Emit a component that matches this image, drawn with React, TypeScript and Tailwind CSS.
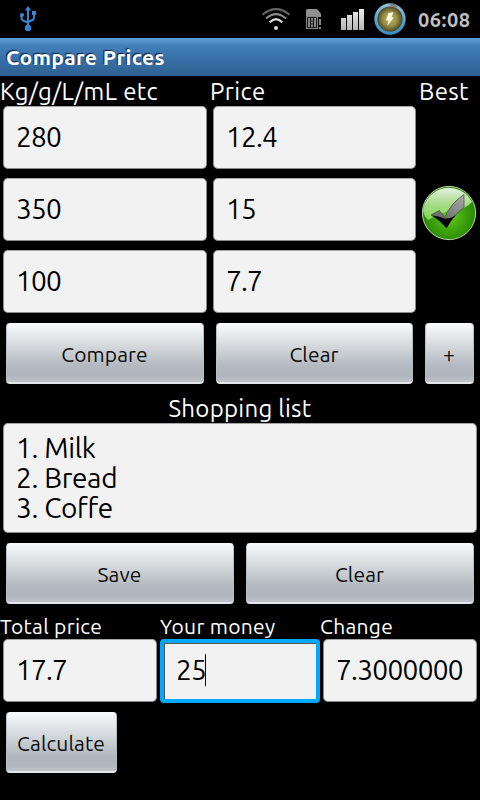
import type { ReactNode } from 'react'

const rows = [
  { amount: '280', price: '12.4' },
  { amount: '350', price: '15' },
  { amount: '100', price: '7.7' },
]

function Field({ children, className = '' }: { children: ReactNode; className?: string }) {
  return (
    <div className={`flex rounded-[5px] border border-[#8c8c8c] border-t-[#a5a5a5] bg-[#f2f2f2] pl-3 text-[28px] leading-[30px] text-black ${className}`}>
      {children}
    </div>
  )
}

function Button({ children, className = '' }: { children: ReactNode; className?: string }) {
  return (
    <button className={`h-[61px] rounded-[4px] border-x border-b-2 border-x-[#b9bec3] border-b-[#e3e5e7] bg-[linear-gradient(#fafbfc_0%,#e4e8eb_22%,#c5cacf_55%,#b2b7c0_75%,#b0b5be_90%,#c0c4c8_100%)] pt-[2px] pr-[1px] text-[21px] leading-[26px] tracking-[0.1px] text-[#0c0c0c] ${className}`}>
      {children}
    </button>
  )
}

function UsbIcon() {
  return (
    <svg className="ml-[18px] h-[28px] w-[20px]" viewBox="0 0 20 28" fill="none" stroke="#3487d3" strokeWidth="2">
      <path d="M10 4v19M10 17.500 5 15.500Q3.500 15 3.500 13V11M10 17l4.500-2Q16 14.400 16 12V9" />
      <path d="m6.800 5.500 3.200-4.500 3.200 4.500Z" fill="#3487d3" stroke="none" />
      <circle cx="4" cy="10" r="2.100" fill="#3487d3" stroke="none" />
      <path d="M14 6h4v4h-4Z" fill="#3487d3" stroke="none" />
      <circle cx="10" cy="23" r="3.2" fill="#3487d3" stroke="none" />
    </svg>
  )
}

function WifiIcon() {
  return (
    <svg className="h-[24px] w-[30px]" viewBox="0 0 30 24" fill="none" strokeWidth="2">
      <path d="M1.5 7.7Q15-3.500 28.5 7.7" stroke="#666" />
      <path d="M5 11.6Q15 2.6 25 11.6" stroke="#8b8b8b" />
      <path d="M8.8 15.2Q15 9 21.2 15.2" stroke="#ddd" strokeWidth="2.3" />
      <circle cx="15" cy="21" r="2" fill="#ddd" />
    </svg>
  )
}

function SimIcon() {
  return (
    <svg className="ml-[15px] h-[20px] w-[16px]" viewBox="0 0 16 20">
      <path d="M0 1.5Q0 0 1.5 0H11l4 4.5V8H0Z" fill="#909090" />
      <path d="M0 7h12v13H0Z" fill="#858585" />
      <path d="M1.5 8.5h9v10h-9ZM4.5 9v3M7.5 9v3M4.5 15v3M7.5 15v3M4.5 12h3v3h-3Z" stroke="#181818" fill="none" />
      <path d="M13 10h2v6h-2ZM13 18h2v2h-2Z" fill="#858585" />
    </svg>
  )
}

function SignalIcon() {
  return (
    <svg className="mt-[2px] ml-[19px] h-[22px] w-[24px]" viewBox="0 0 24 22">
      <defs>
        <linearGradient id="bars" x2="0" y2="1">
          <stop stopColor="#ededed" />
          <stop offset="1" stopColor="#b4b4b4" />
        </linearGradient>
      </defs>
      <path d="M0 9h5v12H0ZM6 6h5v15H6ZM12 3h5v18h-5ZM18 0h5v21h-5Z" fill="url(#bars)" />
    </svg>
  )
}

function BatteryIcon() {
  return (
    <svg className="ml-[7px] h-[36px] w-[36px]" viewBox="0 0 36 36">
      <defs>
        <radialGradient id="charge">
          <stop stopColor="#c4b957" />
          <stop offset=".5" stopColor="#989047" />
          <stop offset=".85" stopColor="#55512d" />
          <stop offset="1" stopColor="#2a2f22" />
        </radialGradient>
        <linearGradient id="ring" x2="0" y2="1">
          <stop stopColor="#8fbdd6" />
          <stop offset="1" stopColor="#3b90c4" />
        </linearGradient>
      </defs>
      <circle cx="18" cy="18" r="16" fill="#174a68" />
      <circle cx="18" cy="18" r="14" fill="url(#charge)" stroke="url(#ring)" strokeWidth="2.8" />
      <path d="M18 4q4 0 7 2" stroke="#8a8379" strokeWidth="3" fill="none" />
      <path d="m16.500 12 5-.8-2 5 2.2.2-6.4 8.3 1.3-5.5-2.8.3Z" fill="#fffce9" />
    </svg>
  )
}

function BestIcon() {
  return (
    <svg className="h-[56px] w-[56px]" viewBox="0 0 56 56">
      <defs>
        <radialGradient id="green" cx=".5" cy=".55" r=".55">
          <stop stopColor="#69c91f" />
          <stop offset=".5" stopColor="#40a60e" />
          <stop offset="1" stopColor="#248100" />
        </radialGradient>
        <linearGradient id="shine" x2="0" y2="1">
          <stop stopColor="#e5f1e0" />
          <stop offset=".5" stopColor="#a7dc8a" />
          <stop offset="1" stopColor="#80d94d" />
        </linearGradient>
        <linearGradient id="tick" x1="1" x2=".3" y2="1">
          <stop stopColor="#aaa" />
          <stop offset="1" stopColor="#606060" />
        </linearGradient>
      </defs>
      <circle cx="28" cy="28" r="26.6" fill="url(#green)" stroke="#b5d6aa" />
      <path d="M2 26A26 26 0 0 1 51 17Q45 24 33 25 20 27 7 35 3 31 2 26Z" fill="url(#shine)" />
      <path d="M10 30 18.500 25.500 23.500 32.500Q30 18 43 9.500V22.500Q32 30 25.500 43 18 34 10 30Z" fill="url(#tick)" stroke="#3d463a" strokeWidth=".7" />
      <path d="M11 30.500Q18 31 23.500 33.500 29 34 35 30 29.500 36 25.500 43 18 34.500 11 30.500Z" fill="#050505" />
    </svg>
  )
}

export default function App() {
  return (
    <div className="h-[800px] w-[480px] overflow-hidden bg-black font-['Ubuntu','Noto_Sans',sans-serif] text-white">
      {/* Status bar */}
      <header className="flex h-[38px] items-center">
        <UsbIcon />
        <div className="ml-auto flex items-center pr-[7px]">
          <WifiIcon />
          <SimIcon />
          <SignalIcon />
          <BatteryIcon />
          <span className="ml-[10px] w-[55px] pt-[2px] text-[20px] leading-6 font-bold tracking-[0.5px] text-[#bfbfbf]">06:08</span>
        </div>
      </header>

      <h1 className="h-[38px] bg-[linear-gradient(#5f9bd5_0%,#528fc8_10%,#427fb9_20%,#356ca3_65%,#2f618f_100%)] pl-[6px] text-[21px] leading-[38px] font-bold tracking-[0.4px] [text-shadow:-1px_-1px_1px_#122238]">
        Compare Prices
      </h1>

      {/* Compare table */}
      <div className="flex h-[30px] text-[24px] leading-[31px] tracking-[0.4px]">
        <span className="w-[210px]">Kg/g/L/mL etc</span>
        <span className="w-[209px]">Price</span>
        <span>Best</span>
      </div>
      <div className="flex">
        <div className="flex flex-col gap-[9px] pl-[3px]">
          {rows.map((row) => (
            <div key={row.amount} className="flex gap-[6px]">
              <Field className="h-[63px] w-[204px] pt-[15px] tracking-[-0.8px]">{row.amount}</Field>
              <Field className="h-[63px] w-[203px] pt-[15px] tracking-[-0.8px]">{row.price}</Field>
            </div>
          ))}
        </div>
        <div className="flex w-[64px] items-center justify-center pl-[2px] pt-[7px]">
          <BestIcon />
        </div>
      </div>
      <div className="flex gap-[12px] px-[6px] pt-[10px]">
        <Button className="w-[198px]">Compare</Button>
        <Button className="w-[197px]">Clear</Button>
        <Button className="w-[49px]">+</Button>
      </div>

      {/* Shopping list */}
      <h2 className="h-[39px] pt-[9px] text-center text-[24px] leading-[31px] tracking-[0.3px]">Shopping list</h2>
      <Field className="mx-[3px] h-[110px] flex-col pt-[9px] tracking-[-0.3px]">
        <p>1. Milk</p>
        <p>2. Bread</p>
        <p>3. Coffe</p>
      </Field>
      <div className="flex gap-[12px] px-[6px] pt-[10px]">
        <Button className="w-[228px]">Save</Button>
        <Button className="w-[228px]">Clear</Button>
      </div>

      {/* Change calculator */}
      <div className="grid h-[35px] grid-cols-3 pt-[9px] text-[21px] leading-[26px] tracking-[0.3px]">
        <span>Total price</span>
        <span>Your money</span>
        <span>Change</span>
      </div>
      <div className="flex h-[64px] gap-[3px] pl-[3px]">
        <Field className="h-[63px] w-[154px] pt-[15px] tracking-[-0.8px]">17.7</Field>
        <div className="flex h-[64px] w-[160px] rounded-[4px] border-4 border-[#00a8ff] bg-[#f2f2f2] pl-[12px] pt-[12px] text-[28px] leading-[30px] tracking-[-0.8px] text-black shadow-[inset_1px_1px_0_#555]">
          25
          <span className="-mt-px -ml-px h-[32px] w-px bg-black" />
        </div>
        <Field className="h-[63px] w-[154px] pt-[15px] tracking-[-0.7px]">7.3000000</Field>
      </div>
      <div className="pl-[6px] pt-[9px]">
        <Button className="w-[111px]">Calculate</Button>
      </div>
    </div>
  )
}
